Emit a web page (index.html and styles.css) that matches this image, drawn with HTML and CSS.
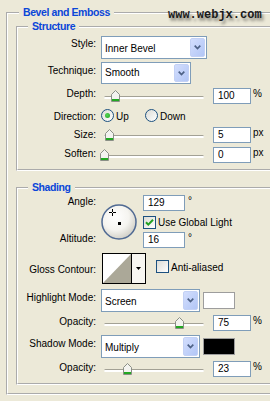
FILE: index.html
```html
<!DOCTYPE html>
<html>
<head>
    <title>Bevel and Emboss</title>
    <link rel="stylesheet" href="styles.css">
</head>
<body>
    <div class="watermark">www.webjx.com</div>

    <fieldset class="group outer">
        <legend>Bevel and Emboss</legend>

        <!-- Structure -->
        <fieldset class="group sub structure">
            <legend>Structure</legend>

            <div class="row mt2">
                <div class="lbl">Style:</div>
                <div class="combo tall w106">
                    <span class="combo-text">Inner Bevel</span>
                    <div class="combo-btn"><svg width="7" height="5" viewBox="0 0 7 5"><path d="M0.7 0.7 L3.5 3.5 L6.3 0.7" fill="none" stroke="#4d6185" stroke-width="1.7"/></svg></div>
                </div>
            </div>

            <div class="row mt3">
                <div class="lbl t3">Technique:</div>
                <div class="combo w90">
                    <span class="combo-text">Smooth</span>
                    <div class="combo-btn"><svg width="7" height="5" viewBox="0 0 7 5"><path d="M0.7 0.7 L3.5 3.5 L6.3 0.7" fill="none" stroke="#4d6185" stroke-width="1.7"/></svg></div>
                </div>
            </div>

            <div class="row mt4">
                <div class="lbl t0">Depth:</div>
                <div class="slider">
                    <div class="track"></div>
                    <div class="thumb" style="left: 10px"><svg width="9" height="12" viewBox="0 0 9 12"><path d="M4.5 0.5 L8.5 4.5 V11.5 H0.5 V4.5 Z" fill="#f3f3ef" stroke="#8a8f86"/><rect x="1" y="9" width="7" height="2" fill="#22a822"/></svg></div>
                </div>
                <div class="field">100</div>
                <div class="unit">%</div>
            </div>

            <div class="row mt5">
                <div class="lbl">Direction:</div>
                <div class="opt opt-up">
                    <span class="radio checked"></span><span class="opt-text">Up</span>
                </div>
                <div class="opt">
                    <span class="radio"></span><span class="opt-text">Down</span>
                </div>
            </div>

            <div class="row mt4">
                <div class="lbl">Size:</div>
                <div class="slider">
                    <div class="track"></div>
                    <div class="thumb" style="left: 4px"><svg width="9" height="12" viewBox="0 0 9 12"><path d="M4.5 0.5 L8.5 4.5 V11.5 H0.5 V4.5 Z" fill="#f3f3ef" stroke="#8a8f86"/><rect x="1" y="9" width="7" height="2" fill="#22a822"/></svg></div>
                </div>
                <div class="field">5</div>
                <div class="unit">px</div>
            </div>

            <div class="row mt4">
                <div class="lbl t1">Soften:</div>
                <div class="slider">
                    <div class="track"></div>
                    <div class="thumb" style="left: -1px"><svg width="9" height="12" viewBox="0 0 9 12"><path d="M4.5 0.5 L8.5 4.5 V11.5 H0.5 V4.5 Z" fill="#f3f3ef" stroke="#8a8f86"/><rect x="1" y="9" width="7" height="2" fill="#22a822"/></svg></div>
                </div>
                <div class="field">0</div>
                <div class="unit">px</div>
            </div>
        </fieldset>

        <!-- Shading -->
        <fieldset class="group sub shading">
            <legend>Shading</legend>

            <div class="row angle-block">
                <div class="angle-labels">
                    <div class="lbl t1">Angle:</div>
                    <div class="lbl altitude">Altitude:</div>
                </div>
                <div class="dial">
                    <svg width="36" height="36" viewBox="0 0 36 36">
                        <defs>
                            <radialGradient id="dialFill" cx="40%" cy="35%" r="70%">
                                <stop offset="0" stop-color="#ffffff"/>
                                <stop offset="0.55" stop-color="#f5f4f0"/>
                                <stop offset="1" stop-color="#cdcbc2"/>
                            </radialGradient>
                        </defs>
                        <circle cx="18" cy="18" r="17" fill="url(#dialFill)" stroke="#506a93" stroke-width="1.5"/>
                        <path d="M8 8.5h3M12 8.5h3M11.5 5v3M11.5 9v3" stroke="#000" stroke-width="1"/>
                        <rect x="17" y="18" width="3" height="3" fill="#000"/>
                    </svg>
                </div>
                <div class="angle-controls">
                    <div class="row">
                        <div class="field w42">129</div>
                        <div class="unit deg">°</div>
                    </div>
                    <div class="opt global">
                        <span class="check"><svg width="11" height="11" viewBox="0 0 11 11"><path d="M2 5.2 L4.3 7.6 L9 2.8" fill="none" stroke="#21a121" stroke-width="2"/></svg></span><span class="opt-text">Use Global Light</span>
                    </div>
                    <div class="row alt-row">
                        <div class="field w42">16</div>
                        <div class="unit deg">°</div>
                    </div>
                </div>
            </div>

            <div class="row mt5">
                <div class="lbl t11">Gloss Contour:</div>
                <div class="contour">
                    <svg class="contour-preview" width="28" height="29" viewBox="0 0 28 29">
                        <rect width="28" height="29" fill="#fff"/>
                        <polygon points="0,29 28,0 28,29" fill="#aba898"/>
                    </svg>
                    <div class="contour-btn"><svg width="5" height="3" viewBox="0 0 5 3"><polygon points="0,0 5,0 2.5,3" fill="#000"/></svg></div>
                </div>
                <div class="opt anti">
                    <span class="check"></span><span class="opt-text">Anti-aliased</span>
                </div>
            </div>

            <div class="row mt5">
                <div class="lbl t3">Highlight Mode:</div>
                <div class="combo tall w99">
                    <span class="combo-text">Screen</span>
                    <div class="combo-btn"><svg width="7" height="5" viewBox="0 0 7 5"><path d="M0.7 0.7 L3.5 3.5 L6.3 0.7" fill="none" stroke="#4d6185" stroke-width="1.7"/></svg></div>
                </div>
                <div class="swatch white"></div>
            </div>

            <div class="row mt3">
                <div class="lbl t1">Opacity:</div>
                <div class="slider">
                    <div class="track"></div>
                    <div class="thumb" style="left: 74px"><svg width="9" height="12" viewBox="0 0 9 12"><path d="M4.5 0.5 L8.5 4.5 V11.5 H0.5 V4.5 Z" fill="#f3f3ef" stroke="#8a8f86"/><rect x="1" y="9" width="7" height="2" fill="#22a822"/></svg></div>
                </div>
                <div class="field">75</div>
                <div class="unit">%</div>
            </div>

            <div class="row mt4">
                <div class="lbl t3">Shadow Mode:</div>
                <div class="combo tall w99">
                    <span class="combo-text">Multiply</span>
                    <div class="combo-btn"><svg width="7" height="5" viewBox="0 0 7 5"><path d="M0.7 0.7 L3.5 3.5 L6.3 0.7" fill="none" stroke="#4d6185" stroke-width="1.7"/></svg></div>
                </div>
                <div class="swatch black"></div>
            </div>

            <div class="row mt3">
                <div class="lbl t1">Opacity:</div>
                <div class="slider">
                    <div class="track"></div>
                    <div class="thumb" style="left: 22px"><svg width="9" height="12" viewBox="0 0 9 12"><path d="M4.5 0.5 L8.5 4.5 V11.5 H0.5 V4.5 Z" fill="#f3f3ef" stroke="#8a8f86"/><rect x="1" y="9" width="7" height="2" fill="#22a822"/></svg></div>
                </div>
                <div class="field">23</div>
                <div class="unit">%</div>
            </div>
        </fieldset>
    </fieldset>
</body>
</html>
```

FILE: styles.css
```css
html, body {
    margin: 0;
    overflow: hidden;
}

body {
    position: relative;
    width: 270px;
    height: 401px;
    background-color: #ece9d8;
    font-family: "Liberation Sans", Arial, sans-serif;
    font-size: 10px;
    line-height: 12px;
    color: #000;
}

.watermark {
    position: absolute;
    top: 9px;
    left: 168px;
    z-index: 2;
    font-family: "Liberation Mono", "Courier New", monospace;
    font-size: 12px;
    line-height: 12px;
    font-weight: bold;
    color: #1a1a1a;
    text-shadow: 2px 3px 3px rgba(0,0,0,0.45);
    white-space: nowrap;
}

/* group boxes */
.group {
    margin: 0;
    padding: 0;
    min-width: 0;
    border: 2px groove #fff;
}

.group legend {
    padding: 0 4px 2px;
    margin-left: 10px;
    font-size: 10.5px;
    line-height: 12px;
    font-weight: bold;
    letter-spacing: -0.4px;
    color: #0a46d8;
}

.outer {
    width: 320px;
    margin: 6px 0 0 6px;
    padding: 0 0 8px 8px;
}

.outer > legend {
    margin-left: 3px;
}

.sub {
    padding: 0 0 6px 0;
}

.shading {
    margin-top: 10px;
}

/* rows */
.row {
    display: flex;
    align-items: flex-start;
}

.mt2 { margin-top: 2px; }
.mt3 { margin-top: 3px; }
.mt4 { margin-top: 4px; }
.mt5 { margin-top: 5px; }

.lbl {
    width: 78px;
    margin-right: 5px;
    padding-top: 2px;
    text-align: right;
    white-space: nowrap;
}

.lbl.t0 { padding-top: 0; }
.lbl.t1 { padding-top: 1px; }
.lbl.t3 { padding-top: 3px; }
.lbl.t11 { padding-top: 11px; }

/* combo boxes */
.combo {
    display: flex;
    justify-content: space-between;
    align-items: flex-start;
    height: 22px;
    box-sizing: border-box;
    border: 1px solid #7f9db9;
    background-color: #fff;
}

.combo.tall { height: 23px; }
.w106 { width: 106px; }
.w90 { width: 90px; }
.w99 { width: 99px; }

.combo-text {
    padding: 4px 0 0 3px;
}

.combo.tall .combo-text {
    padding-top: 6px;
}

.combo-btn {
    display: flex;
    align-items: center;
    justify-content: center;
    width: 15px;
    height: 18px;
    margin: 1px;
    box-sizing: border-box;
    border: 1px solid #c3d1f5;
    border-radius: 2px;
    background: linear-gradient(to bottom right, #d3defd, #b2c6f6);
}

.combo.tall .combo-btn {
    height: 19px;
}

/* sliders */
.slider {
    position: relative;
    width: 108px;
    height: 16px;
}

.track {
    width: 100px;
    height: 2px;
    margin: 8px 0 0 3px;
    border-top: 1px solid #a3a195;
    border-radius: 2px;
    background-color: #fff;
}

.thumb {
    position: absolute;
    top: 2px;
    line-height: 0;
}

/* text fields */
.field {
    width: 38px;
    height: 16px;
    margin-left: 4px;
    padding-left: 4px;
    box-sizing: border-box;
    border: 1px solid #7f9db9;
    background-color: #fff;
    line-height: 14px;
}

.field.w42 {
    width: 42px;
    margin-left: 0;
}

.unit {
    margin-left: 2px;
}

.unit.deg {
    margin-left: 3px;
}

/* radios and checkboxes */
.opt {
    display: flex;
    align-items: flex-start;
}

.opt-up {
    width: 44px;
}

.opt-text {
    margin-left: 2px;
    padding-top: 2px;
}

.radio, .check {
    display: block;
    width: 13px;
    height: 13px;
    box-sizing: border-box;
    border: 1px solid #1c5180;
    background: linear-gradient(to bottom right, #dcdcd6, #fff);
}

.radio {
    position: relative;
    border-radius: 50%;
}

.radio.checked::after {
    content: "";
    position: absolute;
    top: 3px;
    left: 3px;
    width: 5px;
    height: 5px;
    border-radius: 50%;
    background: radial-gradient(circle at 40% 40%, #55d655, #21a121);
}

.check {
    line-height: 0;
}

.check svg {
    display: block;
}

/* angle block */
.angle-block {
    height: 53px;
}

.angle-labels {
    display: flex;
    flex-direction: column;
    height: 53px;
}

.angle-labels .altitude {
    margin-top: auto;
    margin-bottom: 3px;
    padding-top: 0;
}

.dial {
    margin-top: 9px;
    line-height: 0;
}

.angle-controls {
    margin-left: 6px;
}

.global {
    margin-top: 5px;
}

.global .opt-text {
    padding-top: 1px;
}

.alt-row {
    margin-top: 3px;
}

/* gloss contour */
.contour {
    display: flex;
    width: 44px;
    height: 31px;
    margin-left: 1px;
    box-sizing: border-box;
    border: 1px solid #000;
}

.contour-preview {
    display: block;
}

.contour-btn {
    display: flex;
    align-items: center;
    justify-content: center;
    width: 13px;
    border-left: 1px solid #000;
    background-color: #f7f6f1;
}

.anti {
    margin: 7px 0 0 10px;
}

/* colour swatches */
.swatch {
    width: 32px;
    height: 17px;
    margin: 3px 0 0 3px;
    box-sizing: border-box;
    border: 1px solid #9d9d9d;
}

.swatch.white { background-color: #fff; }
.swatch.black { background-color: #000; }
```
